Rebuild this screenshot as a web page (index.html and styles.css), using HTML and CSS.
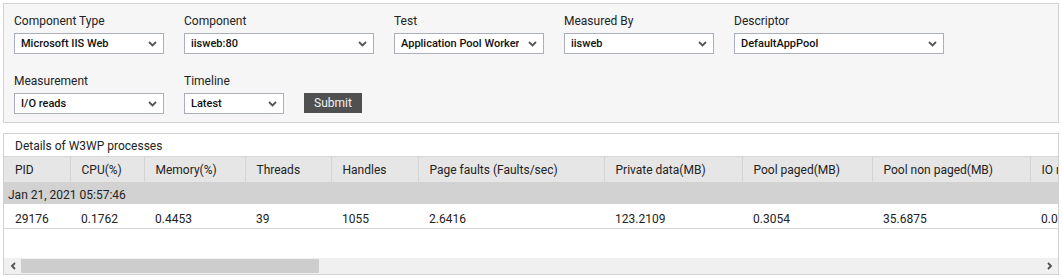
FILE: index.html
```html
<!DOCTYPE html>
<html lang="en">
<head>
    <meta charset="UTF-8">
    <title>W3WP Details</title>
    <link rel="stylesheet" href="styles.css">
</head>
<body>
    <!-- Filter panel -->
    <div class="filters">
        <div class="field">
            <label>Component Type</label>
            <div class="select w150"><span>Microsoft IIS Web</span><svg class="chev" width="9" height="6" viewBox="0 0 9 6"><path d="M1 1l3.5 3.5L8 1" fill="none" stroke="#555" stroke-width="1.8"/></svg></div>
        </div>
        <div class="field">
            <label>Component</label>
            <div class="select w190"><span>iisweb:80</span><svg class="chev" width="9" height="6" viewBox="0 0 9 6"><path d="M1 1l3.5 3.5L8 1" fill="none" stroke="#555" stroke-width="1.8"/></svg></div>
        </div>
        <div class="field">
            <label>Test</label>
            <div class="select w150"><span>Application Pool Worker</span><svg class="chev" width="9" height="6" viewBox="0 0 9 6"><path d="M1 1l3.5 3.5L8 1" fill="none" stroke="#555" stroke-width="1.8"/></svg></div>
        </div>
        <div class="field">
            <label>Measured By</label>
            <div class="select w150"><span>iisweb</span><svg class="chev" width="9" height="6" viewBox="0 0 9 6"><path d="M1 1l3.5 3.5L8 1" fill="none" stroke="#555" stroke-width="1.8"/></svg></div>
        </div>
        <div class="field">
            <label>Descriptor</label>
            <div class="select w210"><span>DefaultAppPool</span><svg class="chev" width="9" height="6" viewBox="0 0 9 6"><path d="M1 1l3.5 3.5L8 1" fill="none" stroke="#555" stroke-width="1.8"/></svg></div>
        </div>

        <div class="break"></div>

        <div class="field">
            <label>Measurement</label>
            <div class="select w150"><span>I/O reads</span><svg class="chev" width="9" height="6" viewBox="0 0 9 6"><path d="M1 1l3.5 3.5L8 1" fill="none" stroke="#555" stroke-width="1.8"/></svg></div>
        </div>
        <div class="field">
            <label>Timeline</label>
            <div class="select w100"><span>Latest</span><svg class="chev" width="9" height="6" viewBox="0 0 9 6"><path d="M1 1l3.5 3.5L8 1" fill="none" stroke="#555" stroke-width="1.8"/></svg></div>
        </div>
        <div class="field submit-field">
            <button class="submit">Submit</button>
        </div>
    </div>

    <!-- Details table -->
    <div class="details">
        <div class="details-title">Details of W3WP processes</div>
        <div class="table-wrap">
            <table class="grid">
                <thead>
                    <tr>
                        <th class="c1">PID</th>
                        <th class="c2">CPU(%)</th>
                        <th class="c3">Memory(%)</th>
                        <th class="c4">Threads</th>
                        <th class="c5">Handles</th>
                        <th class="c6">Page faults (Faults/sec)</th>
                        <th class="c7">Private data(MB)</th>
                        <th class="c8">Pool paged(MB)</th>
                        <th class="c9">Pool non paged(MB)</th>
                        <th class="c10">IO reads(Operations/sec)</th>
                    </tr>
                </thead>
                <tbody>
                    <tr class="group">
                        <td colspan="10">Jan 21, 2021 05:57:46</td>
                    </tr>
                    <tr class="data">
                        <td>29176</td>
                        <td>0.1762</td>
                        <td>0.4453</td>
                        <td>39</td>
                        <td>1055</td>
                        <td>2.6416</td>
                        <td>123.2109</td>
                        <td>0.3054</td>
                        <td>35.6875</td>
                        <td>0.0000</td>
                    </tr>
                </tbody>
            </table>
        </div>
        <!-- Horizontal scrollbar -->
        <div class="hscroll">
            <div class="arrow"><svg width="6" height="8" viewBox="0 0 6 8"><path d="M5 1L2 4l3 3" fill="none" stroke="#505050" stroke-width="1.8"/></svg></div>
            <div class="track"><div class="thumb"></div></div>
            <div class="arrow"><svg width="6" height="8" viewBox="0 0 6 8"><path d="M1 1l3 3-3 3" fill="none" stroke="#505050" stroke-width="1.8"/></svg></div>
        </div>
    </div>
</body>
</html>
```

FILE: styles.css
```css
body {
    margin: 3px 3px 0 3px;
    font-family: Roboto, 'Liberation Sans', sans-serif;
    color: #222;
    background-color: #fff;
}

/* Filter panel */
.filters {
    display: flex;
    flex-wrap: wrap;
    align-items: flex-end;
    column-gap: 20px;
    padding: 9px 10px 8px 10px;
    background-color: #f6f6f6;
    border: 1px solid #d2d2d2;
}

.break {
    flex-basis: 100%;
    height: 19px;
}

.field label {
    display: block;
    font-size: 12px;
    line-height: 16px;
    color: #222;
    margin-bottom: 4px;
}

.select {
    box-sizing: border-box;
    height: 21px;
    display: flex;
    align-items: center;
    justify-content: space-between;
    padding: 0 6px 0 6px;
    background-color: #fff;
    border: 1px solid #abafb9;
    font-size: 11px;
    font-weight: 500;
    color: #111;
}

.select span {
    white-space: nowrap;
    overflow: hidden;
}

.chev {
    flex-shrink: 0;
    margin-left: 6px;
}

.w100 { width: 100px; }
.w150 { width: 150px; }
.w190 { width: 190px; }
.w210 { width: 210px; }

.submit {
    height: 20px;
    padding: 0 10px;
    border: none;
    background-color: #505050;
    color: #f2f2f2;
    font-family: Roboto, 'Liberation Sans', sans-serif;
    font-size: 12px;
    margin-bottom: 1px;
}

/* Details table */
.details {
    margin-top: 10px;
    border: 1px solid #d2d2d2;
}

.details-title {
    height: 22px;
    box-sizing: border-box;
    padding: 3px 0 0 11px;
    line-height: 18px;
    font-size: 12px;
    color: #222;
}

.table-wrap {
    overflow: hidden;
    height: 102px;
}

.grid {
    border-collapse: collapse;
    table-layout: fixed;
    width: 1196px;
    font-size: 12px;
}

.grid th {
    box-sizing: border-box;
    height: 25px;
    padding: 2px 0 0 11px;
    text-align: left;
    font-weight: normal;
    color: #222;
    background-color: #e6e6e6;
    border-top: 1px solid #d6d6d6;
    border-right: 1px solid #d4d4d4;
    white-space: nowrap;
    overflow: hidden;
}

.c1 { width: 66px; }
.c2 { width: 74px; }
.c3 { width: 101px; }
.c4 { width: 86px; }
.c5 { width: 87px; }
.c6 { width: 186px; }
.c7 { width: 138px; }
.c8 { width: 130px; }
.c9 { width: 158px; }
.c10 { width: 170px; }

.group td {
    box-sizing: border-box;
    height: 22px;
    padding: 4px 0 0 4px;
    background-color: #d2d2d2;
    white-space: nowrap;
}

.data td {
    box-sizing: border-box;
    height: 25px;
    padding: 7px 0 0 11px;
    border-bottom: 1px solid #d6d6d6;
    white-space: nowrap;
    overflow: hidden;
}

/* Scrollbar */
.hscroll {
    display: flex;
    height: 16px;
    background-color: #f0f0f0;
}

.arrow {
    width: 17px;
    display: flex;
    align-items: center;
    justify-content: center;
}

.track {
    flex: 1;
    padding-top: 1px;
}

.thumb {
    width: 298px;
    height: 14px;
    background-color: #cdcdcd;
}
```
